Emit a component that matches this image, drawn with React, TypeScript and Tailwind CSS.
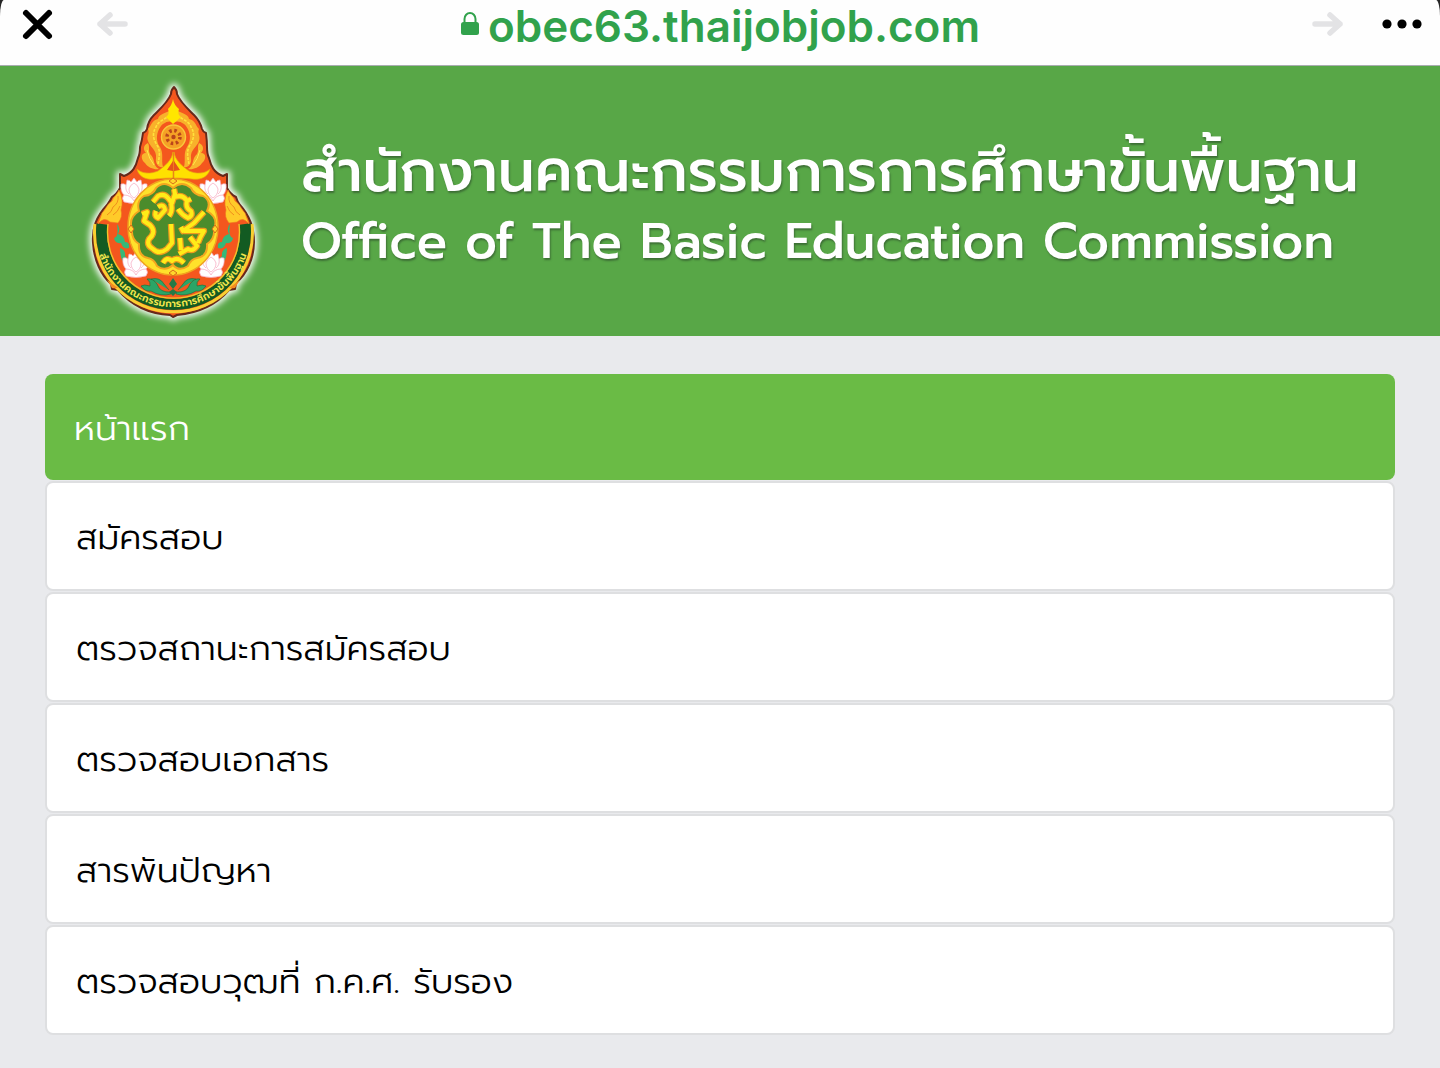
import type { ReactNode } from "react";

const menu = ["สมัครสอบ", "ตรวจสถานะการสมัครสอบ", "ตรวจสอบเอกสาร", "สารพันปัญหา", "ตรวจสอบวุฒที่ ก.ค.ศ. รับรอง"];

function Lotus({ x, y }: { x: number; y: number }) {
  return (
    <g transform={`translate(${x} ${y})`} fill="#fff" stroke="#f6a5bd" strokeWidth="0.7">
      <path d="M-13 -7 Q-10 -8 -8 -6 L-7 -11 Q-4 -11 -3 -9 L0 -13 L3 -9 Q4 -11 7 -11 L8 -6 Q10 -8 13 -7 Q14 0 10 4 Q13 7 10 11 Q0 14 -10 11 Q-13 7 -10 4 Q-14 0 -13 -7Z" />
      <path d="M-10 4 Q-3 4 0 10 Q3 4 10 4 M-5 -2 Q-5 4 0 7 Q5 4 5 -2 Q4 -6 0 -8 Q-4 -6 -5 -2 M-8 -6 Q-9 0 -5 3 M8 -6 Q9 0 5 3" fill="none" />
    </g>
  );
}

function HalfOrnament() {
  return (
    <g>
      {/* flame scroll beside the wheel */}
      <path d="M173 109 C164 114 159 114 158 119 C151 121 152 125 148 129 C150 134 146 136 148 141 C150 147 157 150 156 158 C155 164 159 168 163 167 C161 159 164 154 160 147 C154 139 158 128 163 124 C167 121 170 121 173 122Z" fill="#f8b12b" />
      <path d="M170 115 C164 120 158 121 156 127 C152 133 153 139 157 145 C161 151 159 158 158 164" fill="none" stroke="#ffe23a" strokeWidth="1.6" strokeDasharray="3 1.2" />
      <path d="M148 143 C143 145 143 150 146 153 C140 153 141 160 145 163 C148 168 155 170 159 169 C152 165 156 159 150 154 C148 150 150 147 148 143Z" fill="#f9b62d" />
      <path d="M147 150 q2 9 7 15" fill="none" stroke="#ffe948" />
      {/* canopy below the wheel */}
      <path d="M173 152 C172 160 165 166 158 171 C151 174 142 174 137 169 C138 174 142 178 148 179 C154 180 158 178 173 178Z" fill="#ffe100" stroke="#e7a413" strokeWidth="0.7" />
      <path d="M173 161 L167 170 L173 171Z" fill="#e6531d" />
      {/* side flame */}
      <path d="M119 190 C117 195 113 197 112 201 C107 204 106 209 102 213 C101 217 99 220 98 224 Q104 216 110 222 L118 223 Q123 217 121 210 Q124 200 119 190Z" fill="#ffcb29" stroke="#ee781e" strokeWidth="0.6" />
      <path d="M118 196 q1 7 -5 11 q-1 5 -6 8 M120 206 q-2 6 -7 9" fill="none" stroke="#ee861b" strokeWidth="0.9" />
      {/* leaf scrolls */}
      <path d="M117 224 Q121 228 118 234 Q124 235 125 242 Q130 242 129 248 Q123 250 121 243 Q115 244 114 238 Q119 237 117 224Z M120 248 Q126 250 125 256 Q129 258 126 264 Q120 261 120 248Z" fill="#36b878" />
      <path d="M171 292 Q160 293 157 284 Q153 278 147 279 Q151 282 150 286 Q144 284 141 286 Q145 292 151 291 Q161 297 171 294Z M151 279 Q160 277 164 284 L169 290" fill="#2ba567" stroke="#186b37" strokeWidth="0.6" />
      <Lotus x={134} y={191} />
      <Lotus x={136} y={265} />
    </g>
  );
}

function Emblem() {
  const outline =
    "M174 87 C172 89 171 91 171 94 C168 102 160 109 154 115 Q148 121 147 129 Q146 132 143 133 Q142 141 140 147 Q140 154 138 158 C136 166 133 173 124 176 L120 174 L120 188 Q117 194 112 197 Q110 201 107 205 C96 217 92 228 93 243 C94 260 101 275 111 284 L112 289 L118 290 C132 306 151 314 170 315 L173 317 L177 315 C198 313 216 305 229 290 L235 289 L236 283 C247 274 254 258 254 242 C254 228 250 216 240 205 Q237 201 236 197 Q230 194 227 188 L227 174 L223 176 C214 173 211 166 209 158 Q207 154 207 147 Q207 141 206 133 Q203 132 202 129 Q200 121 194 115 C188 109 180 102 177 94 C177 91 176 89 174 87Z";
  const petals = "M173 188 Q182 180 191 188 Q194 195 203 196 Q212 201 207 211 Q219 218 214 229 Q215 239 207 244 Q208 256 197 258 Q191 259 188 266 Q179 272 173 265 Q165 272 157 266 Q154 259 148 258 Q138 256 139 244 Q131 239 132 229 Q128 218 139 211 Q136 201 144 196 Q153 195 156 188 Q164 180 173 188Z";
  const monogram =
    "M153 202 L158 196 Q164 193 168 198 L172 203 L175 194 L174 189 M175 197 Q183 194 187 201 L191 199 M187 201 Q185 208 191 211 Q193 216 188 218 Q182 215 178 209 M171 203 Q173 211 169 216 M158 207 Q164 203 165 210 L158 218 Q154 216 156 211 M142 214 L147 212 L144 221 L150 225 Q157 232 149 239 Q146 245 153 249 Q159 255 167 249 L172 243 L171 224 M204 212 L194 223 L183 231 L181 227 M184 231 L204 231 Q200 237 198 243 M190 237 L197 246 Q193 252 188 249 L179 254 M180 238 L181 250 M163 263 Q167 256 172 261 Q177 256 184 263";
  return (
    <svg viewBox="77 73 192 256" className="h-full w-full" role="img" aria-label="ตราสำนักงานคณะกรรมการการศึกษาขั้นพื้นฐาน">
      <defs>
        <filter id="halo" x="-20%" y="-20%" width="140%" height="140%">
          <feGaussianBlur stdDeviation="3" />
        </filter>
        <path id="ribbon" d="M99 229 A 74 74 0 0 0 247 229" />
      </defs>
      <path d={outline} fill="#fff" stroke="#fff" strokeWidth="7" strokeLinejoin="round" filter="url(#halo)" />
      <path d={outline} fill="#f4571e" stroke="#66291a" strokeWidth="2" strokeLinejoin="round" />
      <path d="M95 224 A 79 79 0 1 0 252 224" fill="none" stroke="#f9cf31" strokeWidth="3" />
      <path d="M102 224 A 72 72 0 1 0 245 224" fill="none" stroke="#135b22" strokeWidth="11" />
      <path d="M108 224 A 66 66 0 1 0 239 224" fill="none" stroke="#f0c52b" strokeWidth="1.4" />
      <path d="M107 280 L112 288 L118 288Z M240 280 L235 288 L229 288Z" fill="#f58b22" />
      <HalfOrnament />
      <g transform="translate(347 0) scale(-1 1)"><HalfOrnament /></g>
      <text className="text-[10px] font-semibold" dy="4" fill="#f2e64d" fontFamily="'Prompt','Noto Sans Thai','Noto Sans',sans-serif">
        <textPath href="#ribbon" startOffset="50%" textAnchor="middle">สำนักงานคณะกรรมการการศึกษาขั้นพื้นฐาน</textPath>
      </text>
      <path d="M173 99 Q172 105 168 109 Q170 114 166 117 L173 124 L181 117 Q177 114 179 109 Q174 105 173 99Z" fill="#ffe600" />
      <circle cx="173.500" cy="137" r="12" fill="#f5a125" stroke="#f9c93b" strokeWidth="1.4" />
      <circle cx="173.500" cy="137" r="6.500" fill="none" stroke="#ba451b" strokeWidth="3.500" strokeDasharray="2.5 2.605" />
      <circle cx="173.500" cy="137" r="2.200" fill="#b8441b" />
      <ellipse cx="173" cy="227" rx="45" ry="48" fill="#ffe12b" stroke="#f0a31f" strokeWidth="1.500" />
      <path d={petals} fill="#4b8c2c" stroke="#f3a61f" strokeWidth="2" />
      <path d={monogram} fill="none" stroke="#ee991c" strokeWidth="6.400" strokeLinejoin="round" />
      <path d={monogram} fill="none" stroke="#ffec18" strokeWidth="4" strokeLinejoin="round" />
      <g fill="#ffd52c" stroke="#d86c1a">
        <path d="M173 178 l4 3 -4 3 -4 -3z M173 270 l4 3 -4 3 -4 -3z M131 225 l3 4 -3 4 -3 -4z M215 225 l3 4 -3 4 -3 -4z" />
      </g>
      <path d="M173 278 l4 6 -4 5 -4 -5z M173 289 l4 3 -4 4 -4 -4z" fill="#247946" />
    </svg>
  );
}

function BarButton({ label, disabled, className, children }: { label: string; disabled?: boolean; className: string; children: ReactNode }) {
  return (
    <button type="button" aria-label={label} disabled={disabled} className={className}>
      {children}
    </button>
  );
}

export default function App() {
  return (
    <div className="min-h-screen bg-[#e9eaed] font-['Prompt','Noto_Sans_Thai','Noto_Sans',sans-serif]">
      <div className="bg-[#262626]">
        <div className="flex h-[66px] items-start justify-between border-b border-[#a9adb0] bg-[#fefefe] px-4 [border-radius:4px_4px_0_0/16px_16px_0_0]">
          <div className="flex h-12 flex-1 items-center gap-8">
            <BarButton label="ปิด" className="text-black">
              <svg viewBox="0 0 44 44" className="size-11" fill="none" stroke="currentColor" strokeWidth="6" strokeLinecap="round">
                <path d="M10 11 L33 34 M33 11 L10 34" />
              </svg>
            </BarButton>
            <BarButton label="ย้อนกลับ" disabled className="text-[#e3e3e5]">
              <svg viewBox="0 0 40 32" className="h-8 w-10" fill="none" stroke="currentColor" strokeWidth="5.500" strokeLinecap="round" strokeLinejoin="round">
                <path d="M33 16 H8 M18 7 L8 16 L18 25" />
              </svg>
            </BarButton>
          </div>
          <div className="flex h-12 items-center gap-2 text-[#31a24c]">
            <svg viewBox="0 0 20 26" className="h-[26px] w-5" fill="none">
              <path d="M4.500 12 V8 A5.500 6 0 0 1 15.500 8 V12" stroke="currentColor" strokeWidth="2" />
              <rect x="1" y="11" width="18" height="13" rx="2.500" fill="currentColor" />
            </svg>
            <span className="mt-1 font-['Inter','Liberation_Sans',sans-serif] text-[44px] leading-[48px] font-semibold">obec63.thaijobjob.com</span>
          </div>
          <div className="flex h-12 flex-1 items-center justify-end gap-8">
            <BarButton label="ไปข้างหน้า" disabled className="text-[#e3e3e5]">
              <svg viewBox="0 0 40 32" className="h-8 w-10" fill="none" stroke="currentColor" strokeWidth="5.500" strokeLinecap="round" strokeLinejoin="round">
                <path d="M7 16 H32 M22 7 L32 16 L22 25" />
              </svg>
            </BarButton>
            <BarButton label="เพิ่มเติม" className="text-black">
              <svg viewBox="0 0 44 44" className="size-11" fill="currentColor">
                <circle cx="7" cy="22" r="4.600" />
                <circle cx="22" cy="22" r="4.600" />
                <circle cx="37" cy="22" r="4.600" />
              </svg>
            </BarButton>
          </div>
        </div>
      </div>

      <header className="flex h-[270px] items-center gap-8 bg-[#58a747] pl-[77px]">
        <div className="h-64 w-48 shrink-0">
          <Emblem />
        </div>
        <div className="flex-1 pt-2 font-medium whitespace-nowrap text-white [text-shadow:1px_2px_2px_#3d6f35]">
          <p className="text-[58px] leading-[72px]">สำนักงานคณะกรรมการการศึกษาขั้นพื้นฐาน</p>
          <h1 className="text-[50px] leading-[66px]">Office of The Basic Education Commission</h1>
        </div>
      </header>

      <nav className="px-[45px] pt-[38px] pb-8" aria-label="เมนูหลัก">
        <ul className="flex flex-col gap-px text-[35px] font-light">
          <li>
            <a href="#home" aria-current="page" className="flex h-[106px] items-center rounded-lg bg-[#6abb45] px-[29px] pt-1 text-white">
              หน้าแรก
            </a>
          </li>
          {menu.map((label) => (
            <li key={label}>
              <a href="#menu" className="flex h-[110px] items-center rounded-lg border-2 border-[#dedfe1] bg-white px-[29px] pt-1 text-black">
                {label}
              </a>
            </li>
          ))}
        </ul>
      </nav>
    </div>
  );
}
